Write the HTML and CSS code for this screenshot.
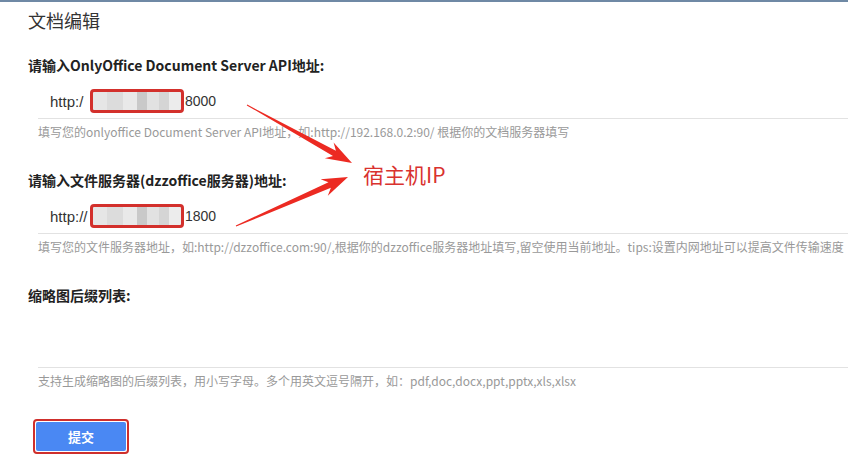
FILE: index.html
```html
<!DOCTYPE html>
<html>
<head>
    <title>文档编辑</title>
    <link rel="stylesheet" href="styles.css">
</head>
<body>
    <div class="page">
        <h2 class="page-title">文档编辑</h2>
        <form class="setting-form">
            <div class="form-group">
                <label class="form-label">请输入OnlyOffice Document Server API地址:</label>
                <div class="form-input"><span class="prefix">http:/</span><span class="masked"></span>8000</div>
                <p class="form-help">填写您的onlyoffice Document Server API地址，如:http://192.168.0.2:90/ 根据你的文档服务器填写</p>
            </div>
            <div class="form-group">
                <label class="form-label">请输入文件服务器(dzzoffice服务器)地址:</label>
                <div class="form-input"><span class="prefix">http://</span><span class="masked"></span>1800</div>
                <p class="form-help">填写您的文件服务器地址，如:http://dzzoffice.com:90/,根据你的dzzoffice服务器地址填写,留空使用当前地址。tips:设置内网地址可以提高文件传输速度</p>
            </div>
            <div class="form-group">
                <label class="form-label">缩略图后缀列表:</label>
                <div class="form-input form-textarea"></div>
                <p class="form-help">支持生成缩略图的后缀列表，用小写字母。多个用英文逗号隔开，如：pdf,doc,docx,ppt,pptx,xls,xlsx</p>
            </div>
            <div class="form-actions">
                <span class="highlight">
                    <button type="button" class="btn-submit">提交</button>
                </span>
            </div>
        </form>

        <!-- annotation drawn over the screenshot -->
        <svg class="annotation" width="848" height="458" viewBox="0 0 848 458">
            <polygon points="247.2,104.6 335.9,150.7 333.6,142.6 352,163 324.9,158.3 333.0,155.9 246.8,105.4" fill="#ec2a22"/>
            <polygon points="235.8,225.5 328.5,182.3 320.6,179.2 348,177 327.8,195.7 330.9,187.8 236.2,226.5" fill="#ec2a22"/>
        </svg>
        <div class="annotation-text">宿主机IP</div>
    </div>
</body>
</html>
```

FILE: styles.css
```css
/* page */
body {
    margin: 0;
    background: #fff;
    font-family: "Noto Sans CJK SC", "DejaVu Sans", sans-serif;
    color: #333;
}

.page {
    position: relative;
    height: 456px;
    border-top: 2px solid #6f89a5;
    padding-left: 28px;
    overflow: hidden;
}

.page-title {
    margin: 0;
    padding-top: 6px;
    font-size: 18px;
    font-weight: normal;
    line-height: 24px;
    color: #333;
}

.setting-form {
    margin: 0;
    padding-top: 23px;
}

.form-group {
    margin-bottom: 28px;
}

.form-group:last-of-type {
    margin-bottom: 21px;
}

.form-label {
    display: block;
    font-size: 14px;
    font-weight: bold;
    line-height: 20px;
    color: #222;
}

.form-input {
    display: flex;
    align-items: center;
    height: 34px;
    margin-top: 9px;
    margin-left: 10px;
    padding-left: 12px;
    border-bottom: 1px solid #e2e2e2;
    font-family: "Liberation Sans", "Noto Sans CJK SC", sans-serif;
    font-size: 14px;
    color: #333;
}

.form-input .prefix {
    width: 40px;
    font-size: 15px;
}

.form-textarea {
    height: 53px;
}

.masked {
    display: inline-block;
    width: 88px;
    height: 18px;
    margin-right: 1px;
    border: 3px solid #d3302c;
    border-radius: 4px;
    background: linear-gradient(90deg, #e6e6e6 0, #e6e6e6 14px, #dcdcdc 14px, #dcdcdc 30px, #e9e9e9 30px, #e9e9e9 44px, #c9c9c9 44px, #c9c9c9 54px, #e2e2e2 54px, #e2e2e2 66px, #d5d5d5 66px, #d5d5d5 76px, #ececec 76px);
}

.form-help {
    margin: 3px 0 0 10px;
    font-size: 12px;
    line-height: 20px;
    color: #999;
}

.form-actions {
    padding-left: 5px;
}

.highlight {
    display: inline-block;
    padding: 1px;
    border: 2px solid #cf2f2c;
    border-radius: 4px;
}

.btn-submit {
    display: block;
    width: 90px;
    height: 29px;
    border: none;
    border-radius: 2px;
    background-color: #4a88f3;
    color: #fff;
    font-family: "Noto Sans CJK SC", sans-serif;
    font-size: 13px;
    font-weight: bold;
    cursor: pointer;
}

.annotation {
    position: absolute;
    top: -2px;
    left: 0;
    pointer-events: none;
}

.annotation-text {
    position: absolute;
    top: 157px;
    left: 363px;
    font-size: 21px;
    line-height: 30px;
    color: #d9322f;
}
```
